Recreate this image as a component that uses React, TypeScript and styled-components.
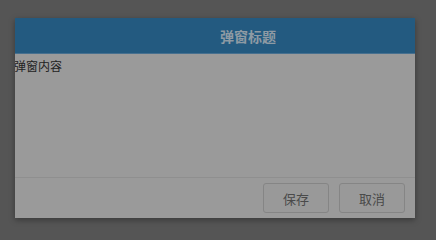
import React from "react";
import styled, { createGlobalStyle } from "styled-components";

const Global = createGlobalStyle`
  html, body { margin: 0; padding: 0; }
  body {
    background: #555555;
    width: 436px;
    height: 239px;
    overflow: hidden;
    font-family: "Noto Sans CJK SC", "Liberation Sans", sans-serif;
  }
`;

const Page = styled.div`
  width: 436px;
  height: 239px;
  padding: 18px 21px 0 15px;
  box-sizing: border-box;
`;

const Dialog = styled.div`
  width: 400px;
  height: 200px;
  background: #9a9a9a;
  display: flex;
  flex-direction: column;
  overflow: hidden;
  box-shadow: 0 2px 6px rgba(0, 0, 0, 0.35);
`;

const Header = styled.div`
  height: 36px;
  flex: none;
  background: #235a80;
  border-bottom: 1px solid #47708f;
  box-sizing: border-box;
  display: flex;
  align-items: center;
  justify-content: center;
  padding-left: 66px;
  color: #8e9aa4;
  font-size: 14px;
  font-weight: 700;
`;

const Body = styled.div`
  flex: 1;
  padding: 3px 0 0 0;
  margin-left: -1px;
  font-size: 12px;
  line-height: 17px;
  color: #222;
`;

const Footer = styled.div`
  height: 41px;
  flex: none;
  border-top: 1px solid #8f8f8f;
  box-sizing: border-box;
  display: flex;
  justify-content: flex-end;
  align-items: flex-start;
  gap: 10px;
  padding: 5px 10px 0 0;
`;

const Button = styled.button`
  width: 66px;
  height: 30px;
  border: 1px solid #858585;
  border-radius: 3px;
  background: #999999;
  color: #4a4a4a;
  font-family: inherit;
  font-size: 13px;
  padding: 0;
  cursor: pointer;
`;

export default function App() {
  return (
    <>
      <Global />
      <Page>
        <Dialog>
          <Header>弹窗标题</Header>
          <Body>弹窗内容</Body>
          <Footer>
            <Button>保存</Button>
            <Button>取消</Button>
          </Footer>
        </Dialog>
      </Page>
    </>
  );
}
